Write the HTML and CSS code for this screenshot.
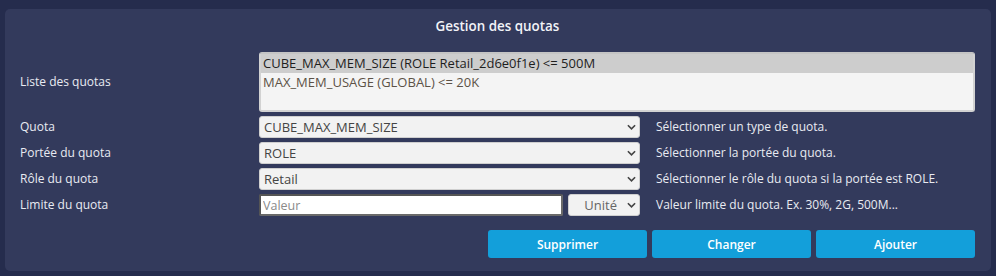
FILE: index.html
```html
<!DOCTYPE html>
<html>
<head>
    <title>Gestion des quotas</title>
    <link rel="stylesheet" href="styles.css">
</head>
<body>
    <div class="panel">
        <h2 class="title">Gestion des quotas</h2>
        <div class="form">
            <label class="label">Liste des quotas</label>
            <div class="listbox">
                <div class="option selected">CUBE_MAX_MEM_SIZE (ROLE Retail_2d6e0f1e) &lt;= 500M</div>
                <div class="option">MAX_MEM_USAGE (GLOBAL) &lt;= 20K</div>
            </div>

            <label class="label" for="quota">Quota</label>
            <div class="select-wrap">
                <select id="quota"><option>CUBE_MAX_MEM_SIZE</option></select>
                <svg class="chevron" viewBox="0 0 10 6"><path d="M1 1l4 4 4-4" /></svg>
            </div>
            <span class="help">Sélectionner un type de quota.</span>

            <label class="label" for="scope">Portée du quota</label>
            <div class="select-wrap">
                <select id="scope"><option>ROLE</option></select>
                <svg class="chevron" viewBox="0 0 10 6"><path d="M1 1l4 4 4-4" /></svg>
            </div>
            <span class="help">Sélectionner la portée du quota.</span>

            <label class="label" for="role">Rôle du quota</label>
            <div class="select-wrap">
                <select id="role"><option>Retail</option></select>
                <svg class="chevron" viewBox="0 0 10 6"><path d="M1 1l4 4 4-4" /></svg>
            </div>
            <span class="help">Sélectionner le rôle du quota si la portée est ROLE.</span>

            <label class="label" for="limit">Limite du quota</label>
            <div class="limit-row">
                <input id="limit" class="value" type="text" placeholder="Valeur">
                <div class="select-wrap unit">
                    <select><option>Unité</option></select>
                    <svg class="chevron" viewBox="0 0 10 6"><path d="M1 1l4 4 4-4" /></svg>
                </div>
            </div>
            <span class="help">Valeur limite du quota. Ex. 30%, 2G, 500M...</span>
        </div>
        <div class="actions">
            <button>Supprimer</button>
            <button>Changer</button>
            <button>Ajouter</button>
        </div>
    </div>
</body>
</html>
```

FILE: styles.css
```css
body {
    margin: 0;
    padding: 9px 5px 5px 5px;
    background-color: #252c4d;
    font-family: "Open Sans", Arial, sans-serif;
    font-size: 12px;
    color: #e9ebf2;
}
.panel {
    background: #333a5c;
    border-radius: 5px;
    padding: 9px 16px 13px 15px;
    height: 240px;
}
.title {
    margin: 0 0 18px 0;
    text-align: center;
    font-size: 13.4px;
    font-weight: 600;
    line-height: 16px;
    color: #f2f3f7;
}
.form {
    display: grid;
    grid-template-columns: 239px 381px 1fr;
    row-gap: 4px;
    align-items: center;
}
.label {
    line-height: 18px;
}
.listbox {
    grid-column: 2 / 4;
    height: 56px;
    background: #f4f4f4;
    border: 2px solid #d2d2d2;
    border-top-color: #c4c4c4;
    border-radius: 3px;
    padding: 0;
    font-size: 13px;
}
.option {
    color: #5c5247;
    line-height: 19px;
    padding-left: 2px;
}
.option.selected {
    background: #cdcdcd;
    color: #1e1e1e;
}
.select-wrap {
    position: relative;
    height: 22px;
}
select {
    appearance: none;
    -webkit-appearance: none;
    width: 100%;
    height: 22px;
    margin: 0;
    padding: 0 20px 0 4px;
    font-family: inherit;
    font-size: 13px;
    color: #444;
    background: #f2f2f2;
    border: 1px solid #cfcfcf;
    border-radius: 3px;
}
.chevron {
    position: absolute;
    right: 4px;
    top: 8px;
    width: 9px;
    height: 6px;
    fill: none;
    stroke: #444;
    stroke-width: 1.8;
    pointer-events: none;
}
.help {
    padding-left: 16px;
    line-height: 18px;
}
.limit-row {
    display: flex;
    gap: 5px;
    height: 22px;
}
.value {
    flex: 1;
    min-width: 0;
    height: 22px;
    box-sizing: border-box;
    margin: 0;
    padding: 0 2px;
    font-family: inherit;
    font-size: 12.5px;
    background: #fff;
    border: 2px solid #555;
    border-right-color: #6a6a6a;
    border-bottom-color: #6a6a6a;
    border-radius: 2px;
}
.value::placeholder {
    color: #8a8a8a;
}
.unit {
    width: 72px;
}
.unit select {
    text-align: right;
    padding-right: 22px;
    color: #666;
}
.actions {
    display: flex;
    justify-content: flex-end;
    gap: 5px;
    margin-top: 14px;
}
button {
    width: 159px;
    height: 28px;
    background-color: #139fda;
    color: white;
    border: none;
    border-radius: 3px;
    font-family: inherit;
    font-size: 12px;
    font-weight: 600;
    cursor: pointer;
}
button:hover {
    background-color: #0f8bc0;
}
```
